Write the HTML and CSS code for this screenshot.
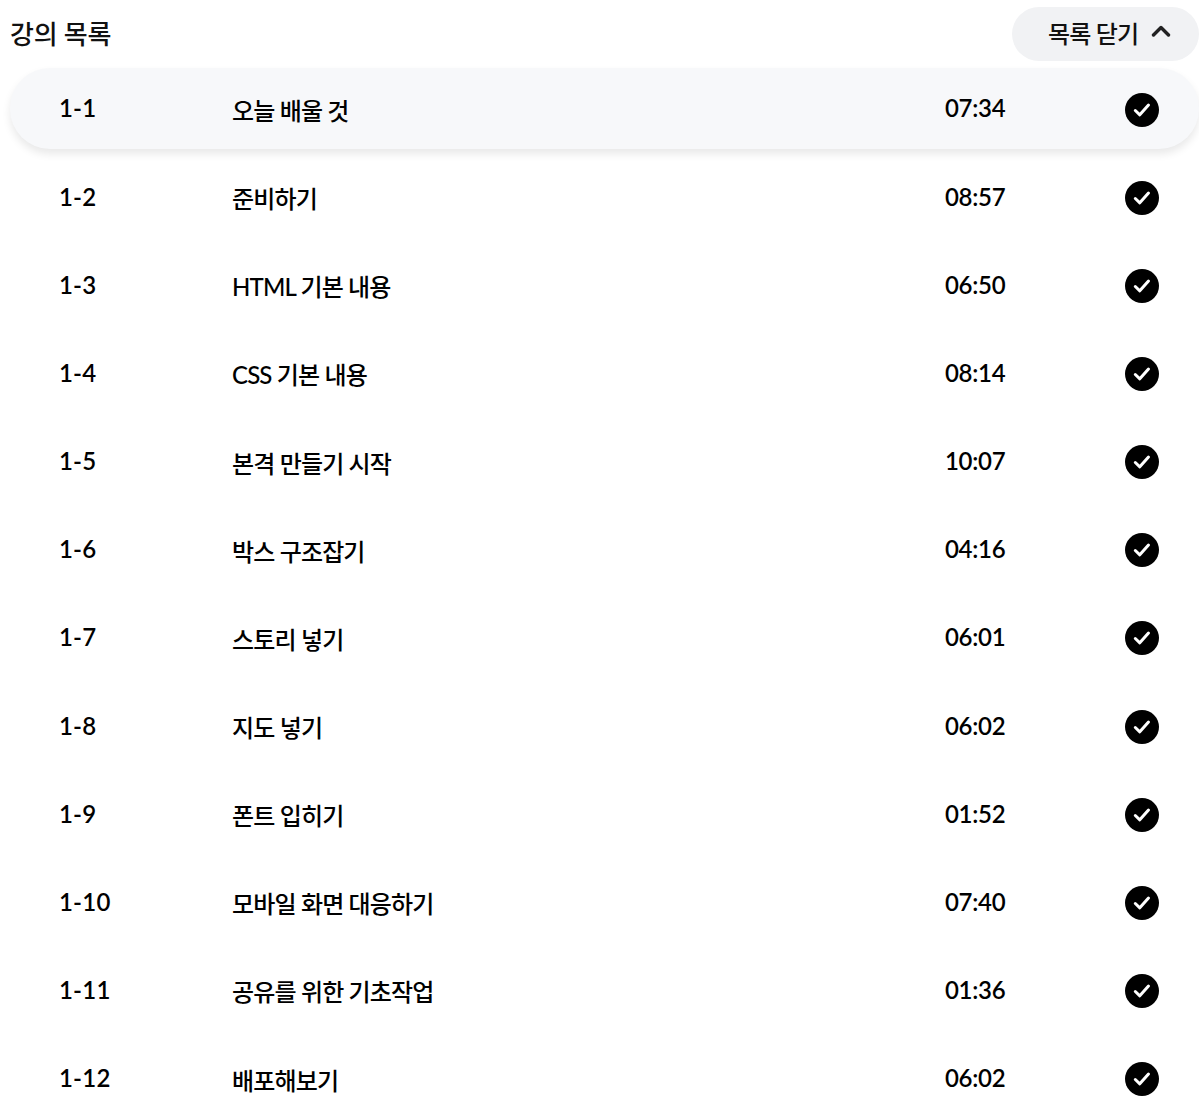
FILE: index.html
```html
<!DOCTYPE html>
<html lang="ko">
<head>
<meta charset="utf-8">
<title>강의 목록</title>
<link rel="stylesheet" href="styles.css">
</head>
<body>
<main class="curriculum">
  <header class="head">
    <h2 class="title">강의 목록</h2>
    <button class="toggle">목록 닫기
      <svg class="chev" viewBox="0 0 20 12" width="20" height="12"><path d="M2.5 10 L10 2.5 L17.5 10" fill="none" stroke="#222" stroke-width="3.4" stroke-linecap="round" stroke-linejoin="round"/></svg>
    </button>
  </header>
  <ul class="list">
    <li class="row active"><span class="num">1-1</span><span class="name">오늘 배울 것</span><span class="time">07:34</span><span class="check"><svg viewBox="0 0 34 34"><circle cx="17" cy="17" r="17" fill="#000"/><path d="M10.3 17.5 L14.8 21.8 L23.5 12" fill="none" stroke="#fff" stroke-width="3" stroke-linecap="round" stroke-linejoin="round"/></svg></span></li>
    <li class="row"><span class="num">1-2</span><span class="name">준비하기</span><span class="time">08:57</span><span class="check"><svg viewBox="0 0 34 34"><circle cx="17" cy="17" r="17" fill="#000"/><path d="M10.3 17.5 L14.8 21.8 L23.5 12" fill="none" stroke="#fff" stroke-width="3" stroke-linecap="round" stroke-linejoin="round"/></svg></span></li>
    <li class="row"><span class="num">1-3</span><span class="name">HTML 기본 내용</span><span class="time">06:50</span><span class="check"><svg viewBox="0 0 34 34"><circle cx="17" cy="17" r="17" fill="#000"/><path d="M10.3 17.5 L14.8 21.8 L23.5 12" fill="none" stroke="#fff" stroke-width="3" stroke-linecap="round" stroke-linejoin="round"/></svg></span></li>
    <li class="row"><span class="num">1-4</span><span class="name">CSS 기본 내용</span><span class="time">08:14</span><span class="check"><svg viewBox="0 0 34 34"><circle cx="17" cy="17" r="17" fill="#000"/><path d="M10.3 17.5 L14.8 21.8 L23.5 12" fill="none" stroke="#fff" stroke-width="3" stroke-linecap="round" stroke-linejoin="round"/></svg></span></li>
    <li class="row"><span class="num">1-5</span><span class="name">본격 만들기 시작</span><span class="time">10:07</span><span class="check"><svg viewBox="0 0 34 34"><circle cx="17" cy="17" r="17" fill="#000"/><path d="M10.3 17.5 L14.8 21.8 L23.5 12" fill="none" stroke="#fff" stroke-width="3" stroke-linecap="round" stroke-linejoin="round"/></svg></span></li>
    <li class="row"><span class="num">1-6</span><span class="name">박스 구조잡기</span><span class="time">04:16</span><span class="check"><svg viewBox="0 0 34 34"><circle cx="17" cy="17" r="17" fill="#000"/><path d="M10.3 17.5 L14.8 21.8 L23.5 12" fill="none" stroke="#fff" stroke-width="3" stroke-linecap="round" stroke-linejoin="round"/></svg></span></li>
    <li class="row"><span class="num">1-7</span><span class="name">스토리 넣기</span><span class="time">06:01</span><span class="check"><svg viewBox="0 0 34 34"><circle cx="17" cy="17" r="17" fill="#000"/><path d="M10.3 17.5 L14.8 21.8 L23.5 12" fill="none" stroke="#fff" stroke-width="3" stroke-linecap="round" stroke-linejoin="round"/></svg></span></li>
    <li class="row"><span class="num">1-8</span><span class="name">지도 넣기</span><span class="time">06:02</span><span class="check"><svg viewBox="0 0 34 34"><circle cx="17" cy="17" r="17" fill="#000"/><path d="M10.3 17.5 L14.8 21.8 L23.5 12" fill="none" stroke="#fff" stroke-width="3" stroke-linecap="round" stroke-linejoin="round"/></svg></span></li>
    <li class="row"><span class="num">1-9</span><span class="name">폰트 입히기</span><span class="time">01:52</span><span class="check"><svg viewBox="0 0 34 34"><circle cx="17" cy="17" r="17" fill="#000"/><path d="M10.3 17.5 L14.8 21.8 L23.5 12" fill="none" stroke="#fff" stroke-width="3" stroke-linecap="round" stroke-linejoin="round"/></svg></span></li>
    <li class="row"><span class="num">1-10</span><span class="name">모바일 화면 대응하기</span><span class="time">07:40</span><span class="check"><svg viewBox="0 0 34 34"><circle cx="17" cy="17" r="17" fill="#000"/><path d="M10.3 17.5 L14.8 21.8 L23.5 12" fill="none" stroke="#fff" stroke-width="3" stroke-linecap="round" stroke-linejoin="round"/></svg></span></li>
    <li class="row"><span class="num">1-11</span><span class="name">공유를 위한 기초작업</span><span class="time">01:36</span><span class="check"><svg viewBox="0 0 34 34"><circle cx="17" cy="17" r="17" fill="#000"/><path d="M10.3 17.5 L14.8 21.8 L23.5 12" fill="none" stroke="#fff" stroke-width="3" stroke-linecap="round" stroke-linejoin="round"/></svg></span></li>
    <li class="row"><span class="num">1-12</span><span class="name">배포해보기</span><span class="time">06:02</span><span class="check"><svg viewBox="0 0 34 34"><circle cx="17" cy="17" r="17" fill="#000"/><path d="M10.3 17.5 L14.8 21.8 L23.5 12" fill="none" stroke="#fff" stroke-width="3" stroke-linecap="round" stroke-linejoin="round"/></svg></span></li>
  </ul>
</main>
</body>
</html>
```
FILE: styles.css
```css
* { box-sizing: border-box; }
html, body { margin: 0; padding: 0; background: #fff; }
body { overflow: hidden; height: 1112px; font-family: Lato, "Noto Sans CJK KR", sans-serif; color: #111; }
.curriculum { margin-left: 10px; margin-top: 7px; width: 1189px; }
.head { display: flex; justify-content: space-between; align-items: center; height: 54px; margin-bottom: 7px; }
.title { margin: 0; font-size: 26px; font-weight: 500; color: #111; letter-spacing: -0.2px; line-height: 52px; }
.toggle { display: flex; align-items: center; gap: 13px; height: 54px; width: 187px; padding: 0 0 3px 36px; border: 0; border-radius: 27px; background: #f1f2f4; font: 500 24px Lato, "Noto Sans CJK KR", sans-serif; letter-spacing: -0.8px; color: #111; }
.chev { margin-bottom: 3px; }
.list { list-style: none; margin: 0; padding: 0; }
.row { display: flex; align-items: center; height: 88.17px; padding-left: 49px; padding-bottom: 1px; font-size: 24px; font-weight: 500; color: #000; letter-spacing: -0.85px; }
.row.active { height: 81px; margin-bottom: 3.5px; padding-bottom: 2px; background: #f7f8fa; border-radius: 40px; box-shadow: 0 5px 8px rgba(0,0,0,.09); }
.num { width: 173px; font-weight: 600; letter-spacing: 0.2px; }
.name { flex: 1; padding-top: 3px; }
.time { width: 180px; font-weight: 600; letter-spacing: -0.3px; }
.check { width: 34px; height: 34px; margin-right: 40px; margin-top: 3px; }
.row.active .check { margin-top: 4px; }
.check svg { display: block; width: 34px; height: 34px; }
```
